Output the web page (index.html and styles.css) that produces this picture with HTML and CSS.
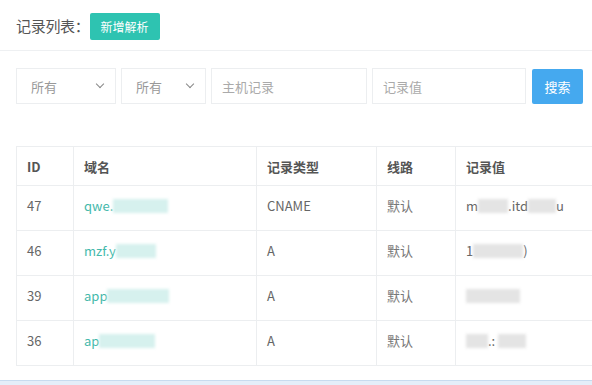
FILE: index.html
```html
<!DOCTYPE html>
<html lang="zh-CN">
<head>
    <meta charset="UTF-8">
    <title>记录列表</title>
    <link rel="stylesheet" href="styles.css">
</head>
<body>
    <div class="page">
        <div class="head">
            <span class="head-title">记录列表：</span>
            <button class="btn-add">新增解析</button>
        </div>

        <form class="filters">
            <div class="select s1"><span>所有</span><i class="caret"></i></div>
            <div class="select s2"><span>所有</span><i class="caret"></i></div>
            <input class="field f1" type="text" placeholder="主机记录">
            <input class="field f2" type="text" placeholder="记录值">
            <button type="button" class="btn-search">搜索</button>
        </form>

        <table class="records">
            <colgroup>
                <col style="width:57px">
                <col style="width:183px">
                <col style="width:120px">
                <col style="width:79px">
                <col>
            </colgroup>
            <thead>
                <tr><th>ID</th><th>域名</th><th>记录类型</th><th>线路</th><th>记录值</th></tr>
            </thead>
            <tbody>
                <tr>
                    <td>47</td>
                    <td class="domain">qwe.<span class="mask teal" style="width:55px"></span></td>
                    <td>CNAME</td><td class="muted">默认</td>
                    <td>m<span class="mask" style="width:30px"></span>.itd<span class="mask" style="width:28px"></span>u</td>
                </tr>
                <tr>
                    <td>46</td>
                    <td class="domain">mzf.y<span class="mask teal" style="width:40px"></span></td>
                    <td>A</td><td class="muted">默认</td>
                    <td>1<span class="mask" style="width:50px"></span>)</td>
                </tr>
                <tr>
                    <td>39</td>
                    <td class="domain">app<span class="mask teal" style="width:62px"></span></td>
                    <td>A</td><td class="muted">默认</td>
                    <td><span class="mask" style="width:54px"></span></td>
                </tr>
                <tr>
                    <td>36</td>
                    <td class="domain">ap<span class="mask teal" style="width:56px"></span></td>
                    <td>A</td><td class="muted">默认</td>
                    <td><span class="mask" style="width:22px"></span>.: <span class="mask" style="width:28px"></span></td>
                </tr>
            </tbody>
        </table>
    </div>
    <div class="footer-strip"></div>
</body>
</html>
```

FILE: styles.css
```css
body {
    margin: 0;
    font-family: "Noto Sans CJK SC", "Open Sans", sans-serif;
    color: #555;
    background: #fff;
    overflow: hidden;
    height: 385px;
    position: relative;
}

.page {
    padding: 0 0 0 16px;
}

.head {
    display: flex;
    align-items: center;
    height: 50px;
    margin-left: -16px;
    padding-left: 16px;
    border-bottom: 1px solid #eef0f2;
}

.head-title {
    font-size: 15px;
    color: #555;
    margin-right: 0;
    letter-spacing: -0.3px;
}

.btn-add {
    background: #2ec3b1;
    color: #fff;
    border: none;
    border-radius: 2px;
    height: 27px;
    width: 70px;
    font-family: inherit;
    font-size: 12px;
    padding: 0;
    margin-top: 3px;
}

.filters {
    display: flex;
    align-items: center;
    gap: 5px;
    margin-top: 17px;
    height: 36px;
}

.select, .field {
    box-sizing: border-box;
    height: 36px;
    border: 1px solid #eceef0;
    background: #fff;
    font-family: inherit;
    font-size: 13px;
    color: #999;
}

.select {
    display: flex;
    align-items: center;
    justify-content: space-between;
    padding: 0 12px 0 14px;
}

.s1 { width: 100px; }
.s2 { width: 85px; }

.caret {
    width: 5px;
    height: 5px;
    border-right: 1.5px solid #888;
    border-bottom: 1.5px solid #888;
    transform: rotate(45deg);
    margin-top: -4px;
}

.field {
    padding: 0 10px;
    outline: none;
}

.field::placeholder { color: #aaa; }

.f1 { width: 156px; }
.f2 { width: 154px; }

.btn-search {
    background: #45a9ef;
    color: #fff;
    border: none;
    border-radius: 2px;
    width: 51px;
    height: 35px;
    font-family: inherit;
    font-size: 13px;
    padding: 0;
    margin-left: 1px;
}

.records {
    margin-top: 42px;
    border-collapse: collapse;
    width: 576px;
    table-layout: fixed;
    font-size: 13px;
}

.records th, .records td {
    border: 1px solid #eceef0;
    text-align: left;
    padding: 0 10px;
    white-space: nowrap;
    overflow: hidden;
}

.records th:last-child, .records td:last-child {
    border-right: none;
}

.records th {
    height: 38px;
    font-weight: 600;
    color: #555;
}

.records td {
    height: 45px;
    color: #666;
    vertical-align: top;
    padding-top: 10px;
    box-sizing: border-box;
}

.records td.muted { color: #777; }

.domain { color: #45b9ab !important; }

.mask {
    display: inline-block;
    height: 14px;
    vertical-align: -2px;
    background: #e4e4e4;
    filter: blur(1.5px);
}

.mask.teal { background: #d6f1ee; }

.footer-strip {
    position: absolute;
    left: 0;
    right: 0;
    top: 380px;
    height: 5px;
    background: #e4eef9;
    border-top: 1px solid #c8dbef;
}
```
